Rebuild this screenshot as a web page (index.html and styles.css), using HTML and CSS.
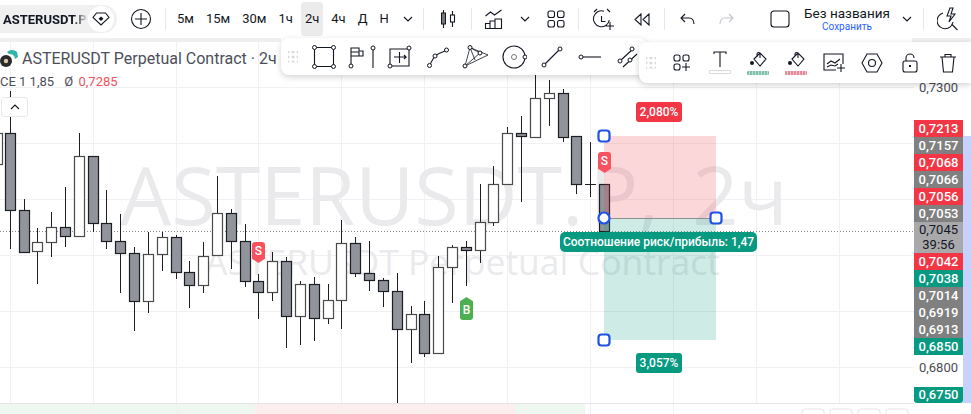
FILE: index.html
```html
<!DOCTYPE html>
<html lang="en">
<head>
<meta charset="UTF-8">
<meta name="viewport" content="width=device-width, initial-scale=1.0">
<title>ASTERUSDT chart</title>
<link rel="stylesheet" href="styles.css">
</head>
<body>

<!-- top toolbar -->
<div class="toolbar">
  <div class="symbol">
    <span class="symbol-name">ASTERUSDT.P</span>
    <span class="symbol-badge">
      <svg width="18" height="14" viewBox="0 0 18 14"><path class="ic" d="M4.500 1h9L17 5.500 9 13 1 5.500z"/><path d="M9 4.500l2.500 2.200L9 9 6.500 6.700z" fill="#131722"/></svg>
    </span>
  </div>
  <button class="btn w48"><svg width="22" height="22" viewBox="0 0 22 22"><circle class="ic" cx="11" cy="11" r="9.500"/><path class="ic" d="M11 5v12M5 11h12"/></svg></button>
  <i class="sep"></i>
  <div class="timeframes">
    <span class="tf">5м</span>
    <span class="tf">15м</span>
    <span class="tf">30м</span>
    <span class="tf">1ч</span>
    <span class="tf active">2ч</span>
    <span class="tf">4ч</span>
    <span class="tf">Д</span>
    <span class="tf">Н</span>
    <svg class="chev" width="10" height="6" viewBox="0 0 10 6"><path class="ic" d="M1 1l4 4 4-4"/></svg>
  </div>
  <i class="sep"></i>
  <button class="btn w47"><svg width="18" height="18" viewBox="0 0 18 18"><path class="ic" d="M4.500 0v3M4.500 14v4M13.500 1v4M13.500 12v5"/><rect x="2.500" y="3" width="4" height="11" fill="#777" stroke="#131722"/><rect class="ic" x="11.500" y="5" width="4" height="7"/></svg></button>
  <i class="sep"></i>
  <button class="btn w44"><svg width="20" height="20" viewBox="0 0 20 20"><path class="ic" d="M1.500 7l5-4 4 3 7-5M1.500 19.500v-5h4.500v5M6 19.500v-7.500h5v7.500M11 19.500v-9.500h6.500v9.500M1 19.500h17"/></svg></button>
  <button class="btn w18"><svg width="10" height="6" viewBox="0 0 10 6"><path class="ic" d="M1 1l4 4 4-4"/></svg></button>
  <button class="btn w44"><svg width="18" height="18" viewBox="0 0 18 18"><rect class="ic" x="1" y="1" width="6.500" height="6.500" rx="2"/><rect class="ic" x="10.500" y="1" width="6.500" height="6.500" rx="2"/><rect class="ic" x="1" y="10.500" width="6.500" height="6.500" rx="2"/><rect class="ic" x="10.500" y="10.500" width="6.500" height="6.500" rx="2"/></svg></button>
  <i class="sep"></i>
  <button class="btn w48"><svg width="24" height="24" viewBox="0 0 24 24"><path class="ic" d="M13 4.200a8 8 0 1 0 5.300 9M10.500 9v5.500h4M3 5l3-3M16 2l3 3M19 15v8M15 19h8"/></svg></button>
  <button class="btn w30"><svg width="16" height="13" viewBox="0 0 16 13"><path class="ic" d="M7 1L1 6.500 7 12zM15 1L9 6.500l6 5.500z"/></svg></button>
  <i class="sep gap7"></i>
  <button class="btn w44"><svg width="15" height="12" viewBox="0 0 15 12"><path class="ic" d="M5 1L1 5l4 4M1 5h8c3 0 5 2 5 6"/></svg></button>
  <button class="btn w34 faint"><svg width="15" height="12" viewBox="0 0 15 12"><path class="ic" d="M10 1l4 4-4 4M14 5H6c-3 0-5 2-5 6"/></svg></button>
  <button class="btn w34 layout-btn"><svg width="20" height="18" viewBox="0 0 20 18"><rect class="ic" x="1" y="1" width="18" height="16" rx="3"/></svg></button>
  <div class="layout-name">
    <span class="layout-title">Без названия</span>
    <span class="layout-save">Сохранить</span>
  </div>
  <button class="btn w33"><svg width="10" height="6" viewBox="0 0 10 6"><path class="ic" d="M1 1l4 4 4-4"/></svg></button>
  <i class="sep"></i>
  <button class="btn w47"><svg width="22" height="24" viewBox="0 0 22 24"><path class="ic" d="M6 6a8 8 0 1 0 10 9M14.500 17l6 6M13 1l-3 8h4l-2 6 6-8h-4l2-6z"/></svg></button>
</div>
<div class="divider"></div>

<div class="chart-area">
  <div class="plot">
    <!-- viewBox uses page coordinates, the plot starts 42px down -->
    <svg class="canvas" width="914" height="372" viewBox="0 42 914 372">
      <rect class="strip-g" x="0" y="404" width="255" height="10"/>
      <rect class="strip-r" x="255" y="404" width="260" height="10"/>
      <rect class="strip-g" x="515" y="404" width="70" height="10"/>
      <path class="grid" d="M10.500 42V404M93.500 42V414M176.500 42V414M258.500 42V414M341.500 42V414M424.500 42V414M507.500 42V414M590.500 42V414M673.500 42V414M756.500 42V404M839.500 42V404"/>
      <path class="grid" d="M0 87.500H914M0 143.500H914M0 199.500H914M0 255.500H914M0 311.500H914M0 367.500H914"/>
      <text class="wm-big" x="120" y="225">ASTERUSDT.<tspan dx="6">P,</tspan><tspan dx="12"> 2ч</tspan></text>
      <text class="wm-small" x="205" y="275">ASTERUSDT Perpetual Contract</text>
      <path class="base" d="M0 403.500H914"/>
      <rect class="mini" x="802" y="409" width="22" height="12" rx="3"/>
      <rect class="mini" x="830" y="409" width="22" height="12" rx="3"/>
      <rect class="mini" x="858" y="409" width="22" height="12" rx="3"/>
      <rect class="mini" x="886" y="409" width="22" height="12" rx="3"/>
      <path class="last" d="M0 231.500H914"/>

      <path class="wick" d="M10.500 91V249M24.500 199V253M37.500 228V284M51.500 212V257M65.500 187V247M79.500 133V156M93.500 156V232M106.500 190V249M120.500 214V293M134.500 247V331M148.500 232V313M162.500 232V271M176.500 235V279M189.500 261V308M203.500 242V293M217.500 176V255M231.500 209V269M245.500 224V287M258.500 274V319M272.500 252V301M286.500 257V348M300.500 281V345M314.500 277V341M328.500 284V324M341.500 220V329M355.500 237V277M369.500 241V291M383.500 278V307M397.500 273V403M411.500 306V363M424.500 301V357M438.500 256V354M452.500 245V303M466.500 241V286M480.500 184V263M493.500 166V226M507.500 127V184M521.500 116V202M535.500 75V137M549.500 80V126M563.500 89V142M576.500 136V194M590.500 142V197M585 184.500H596"/>

      <g class="hollow">
        <rect x="-7.500" y="133.500" width="10" height="31"/>
        <rect x="32.500" y="242.500" width="10" height="9"/>
        <rect x="46.500" y="227.500" width="10" height="15"/>
        <rect x="74.500" y="156.500" width="10" height="80"/>
        <rect x="143.500" y="254.500" width="10" height="47"/>
        <rect x="157.500" y="237.500" width="10" height="17"/>
        <rect x="198.500" y="256.500" width="10" height="29"/>
        <rect x="212.500" y="213.500" width="10" height="42"/>
        <rect x="267.500" y="261.500" width="10" height="31"/>
        <rect x="295.500" y="284.500" width="10" height="32"/>
        <rect x="323.500" y="300.500" width="10" height="18"/>
        <rect x="336.500" y="243.500" width="10" height="57"/>
        <rect x="406.500" y="314.500" width="10" height="15"/>
        <rect x="433.500" y="267.500" width="10" height="86"/>
        <rect x="447.500" y="247.500" width="10" height="20"/>
        <rect x="475.500" y="222.500" width="10" height="28"/>
        <rect x="488.500" y="184.500" width="10" height="38"/>
        <rect x="502.500" y="133.500" width="10" height="51"/>
        <rect x="530.500" y="98.500" width="10" height="39"/>
        <rect x="544.500" y="93.500" width="10" height="5"/>
      </g>
      <g class="filled">
        <rect x="5.500" y="133.500" width="10" height="77"/>
        <rect x="19.500" y="210.500" width="10" height="42"/>
        <rect x="60.500" y="227.500" width="10" height="9"/>
        <rect x="88.500" y="156.500" width="10" height="67"/>
        <rect x="101.500" y="223.500" width="10" height="18"/>
        <rect x="115.500" y="241.500" width="10" height="12"/>
        <rect x="129.500" y="253.500" width="10" height="48"/>
        <rect x="171.500" y="237.500" width="10" height="35"/>
        <rect x="184.500" y="272.500" width="10" height="13"/>
        <rect x="226.500" y="213.500" width="10" height="28"/>
        <rect x="240.500" y="241.500" width="10" height="40"/>
        <rect x="253.500" y="281.500" width="10" height="11"/>
        <rect x="281.500" y="261.500" width="10" height="55"/>
        <rect x="309.500" y="284.500" width="10" height="34"/>
        <rect x="350.500" y="243.500" width="10" height="30"/>
        <rect x="364.500" y="273.500" width="10" height="7"/>
        <rect x="378.500" y="280.500" width="10" height="11"/>
        <rect x="392.500" y="291.500" width="10" height="38"/>
        <rect x="419.500" y="314.500" width="10" height="39"/>
        <rect x="461.500" y="247.500" width="10" height="3"/>
        <rect x="516.500" y="133.500" width="10" height="3"/>
        <rect x="558.500" y="93.500" width="10" height="44"/>
        <rect x="571.500" y="136.500" width="10" height="48"/>
        <rect x="599.500" y="184.500" width="10" height="47"/>
      </g>

      <!-- long position tool -->
      <rect class="zone-risk" x="604" y="136" width="112" height="82"/>
      <rect class="zone-profit" x="604" y="219" width="112" height="121"/>
      <path class="entry" d="M604 218.500H716"/>
      <rect class="handle" x="598.500" y="130.500" width="11" height="11" rx="3"/>
      <circle class="handle" cx="604" cy="218" r="5.500"/>
      <rect class="handle" x="710.500" y="212.500" width="11" height="11" rx="3"/>
      <rect class="handle" x="598.500" y="334.500" width="11" height="11" rx="3"/>
    </svg>

    <span class="tag tag-risk">2,080%</span>
    <span class="tag tag-profit">3,057%</span>
    <span class="tag tag-ratio">Соотношение риск/прибыль: 1,47</span>
    <span class="marker marker-sell marker-s1">S</span>
    <span class="marker marker-sell marker-s2">S</span>
    <span class="marker marker-buy">B</span>
  </div>

  <div class="axis">
    <span class="price plain">0,7300</span>
    <span class="price red first">0,7213</span>
    <span class="price gray">0,7157</span>
    <span class="price red">0,7068</span>
    <span class="price gray">0,7066</span>
    <span class="price red">0,7056</span>
    <span class="price gray">0,7053</span>
    <span class="price now">0,7045<br>39:56</span>
    <span class="price red">0,7042</span>
    <span class="price green">0,7038</span>
    <span class="price gray">0,7014</span>
    <span class="price gray">0,6919</span>
    <span class="price gray">0,6913</span>
    <span class="price green">0,6850</span>
    <span class="price plain near">0,6800</span>
    <span class="price green low">0,6750</span>
  </div>
  <div class="edge"></div>
</div>

<!-- legend on top of the chart -->
<div class="legend">
  <div class="legend-title">
    <svg width="19" height="19" viewBox="0 0 19 19"><path d="M7 3a7 7 0 0 1 10 0l1 5-3 2a5 5 0 0 0-6-5z" fill="#2bb6a8"/><circle cx="6" cy="12" r="6" fill="#2a2a2a"/><circle cx="6" cy="12" r="2.200" fill="#d8c9a8"/></svg>
    <span>ASTERUSDT Perpetual Contract · 2ч ·</span>
  </div>
  <div class="legend-row">CE 1 1,85 <span class="legend-sym">Ø</span> <span class="legend-val">0,7285</span></div>
  <button class="collapse"><svg width="10" height="6" viewBox="0 0 10 6"><path class="ic" d="M1 5l4-4 4 4"/></svg></button>
</div>

<!-- drawing toolbar -->
<div class="float float-draw">
  <span class="dots"></span>
  <button class="tool"><svg width="24" height="24" viewBox="0 0 24 24"><path class="ic" d="M2.500 2.500h19v19h-19z"/><circle class="node" cx="2.500" cy="2.500" r="2"/><circle class="node" cx="21.500" cy="2.500" r="2"/><circle class="node" cx="2.500" cy="21.500" r="2"/><circle class="node" cx="21.500" cy="21.500" r="2"/></svg></button>
  <button class="tool"><svg width="28" height="24" viewBox="0 0 28 24"><path class="ic" d="M3 20V3h8v3h4v5H3M25 5v18"/><path class="ic" d="M3 7h8v4"/><circle class="node" cx="3" cy="21" r="2"/><circle class="node" cx="25" cy="3" r="2"/></svg></button>
  <button class="tool"><svg width="26" height="24" viewBox="0 0 26 24"><path class="ic" d="M3 4h19v17H3zM12.500 7v11M7 12h12l-2-2M19 12l-2 2"/><circle class="node" cx="3" cy="21" r="2"/><circle class="node" cx="22" cy="3" r="2"/></svg></button>
  <button class="tool"><svg width="24" height="24" viewBox="0 0 24 24"><path class="ic" d="M4 20c1-3 3-6 5-9 3-2 7-4 10-5"/><circle class="node" cx="3.500" cy="20.500" r="2"/><circle class="node" cx="9" cy="11" r="2"/><circle class="node" cx="20.500" cy="5" r="2"/></svg></button>
  <button class="tool"><svg width="28" height="24" viewBox="0 0 28 24"><path class="thin" d="M3 21L8 2.500 26 10 3 21 18 8 8 2.500 13 15"/><circle class="node" cx="3" cy="21" r="2"/><circle class="node" cx="8" cy="2.500" r="2"/><circle class="node" cx="18" cy="8" r="2"/></svg></button>
  <button class="tool"><svg width="26" height="26" viewBox="0 0 26 26"><circle class="ic" cx="13" cy="13" r="11"/><circle cx="13" cy="13" r="2.500" fill="none" stroke="#777"/><circle class="node" cx="24" cy="13" r="2"/></svg></button>
  <button class="tool"><svg width="22" height="22" viewBox="0 0 22 22"><path class="ic" d="M3 19L19 3"/><circle class="node" cx="3" cy="19" r="2"/><circle class="node" cx="19" cy="3" r="2"/></svg></button>
  <button class="tool"><svg width="24" height="8" viewBox="0 0 24 8"><path class="ic" d="M5 4h18"/><circle class="node" cx="3" cy="4" r="2"/></svg></button>
  <button class="tool"><svg width="22" height="22" viewBox="0 0 22 22"><path class="ic" d="M3 15L17 2M6 21L20 8"/><circle class="node" cx="3" cy="15" r="2"/><circle class="node" cx="15" cy="3" r="2"/><circle class="node" cx="13" cy="14" r="2"/></svg></button>
</div>

<!-- properties toolbar of the selected drawing -->
<div class="float float-props">
  <span class="dots"></span>
  <button class="tool"><svg width="18" height="18" viewBox="0 0 18 18"><rect class="ic" x="1" y="1" width="6" height="6" rx="2"/><rect class="ic" x="10" y="1" width="6" height="6" rx="2"/><rect class="ic" x="1" y="10" width="6" height="6" rx="2"/><path class="ic" d="M13 9v8M9 13h8"/></svg></button>
  <button class="tool tool-col"><svg width="14" height="16" viewBox="0 0 14 16"><path class="ic" d="M1 3V1h12v2M7 1v15"/></svg><i class="swatch plain-swatch"></i></button>
  <button class="tool tool-col"><svg width="18" height="17" viewBox="0 0 18 17"><path class="ic" d="M5 8l6-6 6 6-6 7zM8 6V3a1.500 1.500 0 0 1 3 0v4"/><circle cx="3" cy="12" r="2" fill="#131722"/></svg><i class="swatch green-swatch"></i></button>
  <button class="tool tool-col"><svg width="18" height="17" viewBox="0 0 18 17"><path class="ic" d="M5 8l6-6 6 6-6 7zM8 6V3a1.500 1.500 0 0 1 3 0v4"/><circle cx="3" cy="12" r="2" fill="#131722"/></svg><i class="swatch red-swatch"></i></button>
  <button class="tool"><svg width="22" height="20" viewBox="0 0 22 20"><path class="ic" d="M13 17H1V1h19v10"/><path class="ic" d="M4 11l4-3 4 2 5-4M4 14l4-2 4 1 3-2M18 11v8M14 15h8"/></svg></button>
  <button class="tool"><svg width="22" height="20" viewBox="0 0 22 20"><path class="ic" d="M6 1h10l5 9-5 9H6l-5-9z"/><circle class="ic" cx="11" cy="10" r="3.500"/></svg></button>
  <button class="tool"><svg width="16" height="20" viewBox="0 0 16 20"><rect class="ic" x="1" y="8" width="14" height="11" rx="2"/><path class="ic" d="M4 8V5a4 4 0 0 1 8 0"/><rect x="7" y="12" width="2" height="2" fill="#131722"/></svg></button>
  <button class="tool"><svg width="18" height="20" viewBox="0 0 18 20"><path class="ic" d="M1 4h16M6 4V1.500h6V4M3 4l1.500 15h9L15 4"/></svg></button>
</div>

</body>
</html>
```

FILE: styles.css
```css
* {
  box-sizing: border-box;
}

html, body {
  margin: 0;
  height: 100%;
  overflow: hidden;
}

body {
  font-family: Roboto, "Noto Sans", sans-serif;
  background-color: #fff;
  color: #131722;
  position: relative;
}

button {
  border: none;
  background: none;
  padding: 0;
  display: flex;
  align-items: center;
  justify-content: center;
}

.ic {
  fill: none;
  stroke: #131722;
  stroke-width: 1.1;
}

.thin {
  fill: none;
  stroke: #131722;
  stroke-width: 0.8;
}

.node {
  fill: #fff;
  stroke: #131722;
  stroke-width: 1;
}

/* top toolbar */
.toolbar {
  display: flex;
  align-items: center;
  height: 38px;
  background-color: #fff;
}

.symbol {
  display: flex;
  align-items: center;
  width: 117px;
  height: 28px;
  background-color: #f0f0f0;
  border-radius: 0 14px 14px 0;
  position: relative;
}

.symbol-name {
  width: 88px;
  padding-left: 3px;
  font-weight: 700;
  font-size: 13px;
  white-space: nowrap;
  overflow: hidden;
  -webkit-mask-image: linear-gradient(90deg, #000 84%, transparent);
  mask-image: linear-gradient(90deg, #000 84%, transparent);
}

.symbol-badge {
  width: 26px;
  height: 26px;
  border-radius: 50%;
  background-color: #fff;
  display: flex;
  align-items: center;
  justify-content: center;
}

.sep {
  width: 1px;
  height: 22px;
  background-color: #e6e7ea;
  flex: none;
}

.sep.gap7 {
  margin-left: 7px;
}

.btn {
  height: 34px;
  flex: none;
}

.w18 { width: 18px; }
.w30 { width: 30px; }
.w33 { width: 33px; }
.w34 { width: 34px; }
.w44 { width: 44px; }
.w47 { width: 47px; }
.w48 { width: 48px; }

.faint .ic {
  stroke: #c4c6cc;
}

.layout-btn {
  margin-left: 20px;
}

.timeframes {
  display: flex;
  align-items: center;
  gap: 4px;
  width: 257px;
  padding-left: 7px;
  font-size: 13px;
}

.tf {
  padding: 0 4px;
  height: 34px;
  line-height: 34px;
  border-radius: 4px;
}

.tf.active {
  background-color: #ebebeb;
}

.chev {
  margin-left: 6px;
}

.layout-name {
  display: flex;
  flex-direction: column;
  align-items: center;
  width: 86px;
  margin-left: 7px;
}

.layout-title {
  font-size: 13.5px;
  line-height: 16px;
  white-space: nowrap;
}

.layout-save {
  font-size: 10px;
  line-height: 12px;
  color: #2962ff;
}

.divider {
  height: 4px;
  background: linear-gradient(90deg, #efefef 281px, #fff 281px, #fff 912px, #efefef 912px);
}

/* chart */
.chart-area {
  display: flex;
  height: 372px;
}

.plot {
  width: 914px;
  flex: none;
  position: relative;
  overflow: hidden;
}

.canvas {
  display: block;
}

.grid {
  fill: none;
  stroke: #f1f1f3;
  stroke-width: 1;
}

.base {
  stroke: #e4e5e8;
}

.last {
  fill: none;
  stroke: #8a8a8a;
  stroke-dasharray: 1 2;
}

.strip-g {
  fill: #eef7ef;
}

.strip-r {
  fill: #fdeeee;
}

.mini {
  fill: #fff;
  stroke: #e4e5e8;
}

.wm-big {
  font-family: "Open Sans", sans-serif;
  font-size: 81px;
  fill: #eaeaec;
}

.wm-small {
  font-family: "Open Sans", sans-serif;
  font-size: 35.5px;
  fill: #eaeaec;
}

.wick {
  fill: none;
  stroke: #1c1e24;
  stroke-width: 1;
}

.hollow rect {
  fill: #fff;
  stroke: #4a4a4a;
  stroke-width: 1.2;
}

.filled rect {
  fill: #92949c;
  stroke: #1c1e24;
  stroke-width: 1.2;
}

.zone-risk {
  fill: rgba(242, 54, 69, 0.2);
}

.zone-profit {
  fill: rgba(8, 153, 129, 0.2);
}

.entry {
  stroke: #8a8f93;
}

.handle {
  fill: #fff;
  stroke: #1e53e5;
  stroke-width: 2.2;
}

/* labels above the drawing, top offsets are relative to the plot */
.tag {
  position: absolute;
  color: #fff;
  font-size: 12px;
  font-weight: 500;
  line-height: 20px;
  height: 20px;
  text-align: center;
  border-radius: 3px;
}

.tag-risk {
  left: 636px;
  top: 60px;
  width: 46px;
  background-color: #f23645;
}

.tag-profit {
  left: 636px;
  top: 311px;
  width: 46px;
  background-color: #089981;
}

.tag-ratio {
  left: 560px;
  top: 190px;
  width: 197px;
  background-color: #089981;
  border-radius: 5px;
  white-space: nowrap;
}

.marker {
  position: absolute;
  width: 13px;
  color: #fff;
  font-size: 12px;
  font-weight: 500;
  text-align: center;
  border-radius: 3px;
}

.marker-sell {
  height: 21px;
  line-height: 18px;
  background-color: #f7525f;
  clip-path: polygon(0 0, 100% 0, 100% 80%, 50% 100%, 0 80%);
}

.marker-s1 {
  left: 598px;
  top: 110px;
}

.marker-s2 {
  left: 252px;
  top: 200px;
}

.marker-buy {
  left: 460px;
  top: 255px;
  height: 23px;
  line-height: 26px;
  background-color: #4caf50;
  clip-path: polygon(50% 0, 100% 18%, 100% 100%, 0 100%, 0 18%);
}

/* price axis */
.axis {
  width: 49px;
  flex: none;
  display: flex;
  flex-direction: column;
  padding-top: 37px;
}

.price {
  height: 17px;
  line-height: 17px;
  font-size: 13px;
  text-align: center;
  flex: none;
}

.plain {
  color: #4a4d55;
}

.first {
  margin-top: 24px;
}

.near {
  margin-top: 4px;
}

.low {
  margin-top: 11px;
  height: 16px;
  line-height: 16px;
  border-radius: 0 0 3px 3px;
}

.red, .gray, .green {
  color: #fff;
  font-weight: 500;
}

.red {
  background-color: #f23645;
}

.gray {
  background-color: #808080;
}

.green {
  background-color: #089981;
}

.now {
  height: 31px;
  line-height: 15px;
  background-color: #a9a9ab;
  color: #131722;
}

.edge {
  width: 8px;
  height: 267px;
  margin-top: 94px;
  background-color: #c6d2fb;
}

/* legend */
.legend {
  position: absolute;
  left: 0;
  top: 48px;
}

.legend-title {
  display: flex;
  align-items: center;
  gap: 3px;
  height: 20px;
  font-size: 16px;
  color: #4c4f5a;
  white-space: nowrap;
}

.legend-row {
  margin-top: 5px;
  font-size: 13px;
  line-height: 18px;
  color: #4c4f5a;
}

.legend-sym {
  margin-left: 7px;
}

.legend-val {
  margin-left: 2px;
  color: #f0525e;
}

.collapse {
  width: 27px;
  height: 20px;
  margin: 6px 0 0 1px;
  background-color: #fff;
  border: 1px solid #e7e8eb;
  border-radius: 3px;
}

/* floating toolbars */
.float {
  position: absolute;
  display: flex;
  align-items: center;
  background-color: #fff;
  border-radius: 0 0 8px 8px;
  box-shadow: 0 2px 6px rgba(0, 0, 0, 0.18);
}

.float-draw {
  left: 281px;
  top: 38px;
  width: 366px;
  height: 37px;
  border-radius: 8px;
}

.float-props {
  left: 639px;
  top: 42px;
  width: 332px;
  height: 41px;
  border-radius: 8px 0 0 8px;
}

.dots {
  width: 24px;
  height: 12px;
  flex: none;
  background-image: radial-gradient(circle, #c9cbd0 1px, transparent 1.3px);
  background-size: 5px 5px;
  background-position: center;
  background-repeat: repeat;
  clip-path: inset(0 7px);
}

.tool {
  width: 38px;
  height: 34px;
  flex: none;
}

.tool-col {
  flex-direction: column;
  gap: 3px;
}

.swatch {
  display: block;
  width: 22px;
  height: 4px;
  border-radius: 1px;
}

.plain-swatch {
  border: 1px solid #d9dade;
}

.green-swatch {
  background: repeating-linear-gradient(90deg, #7ec0ab 0 2px, #b8dfd2 2px 3px);
}

.red-swatch {
  background: repeating-linear-gradient(90deg, #e38a98 0 2px, #f3c2ca 2px 3px);
}
```
